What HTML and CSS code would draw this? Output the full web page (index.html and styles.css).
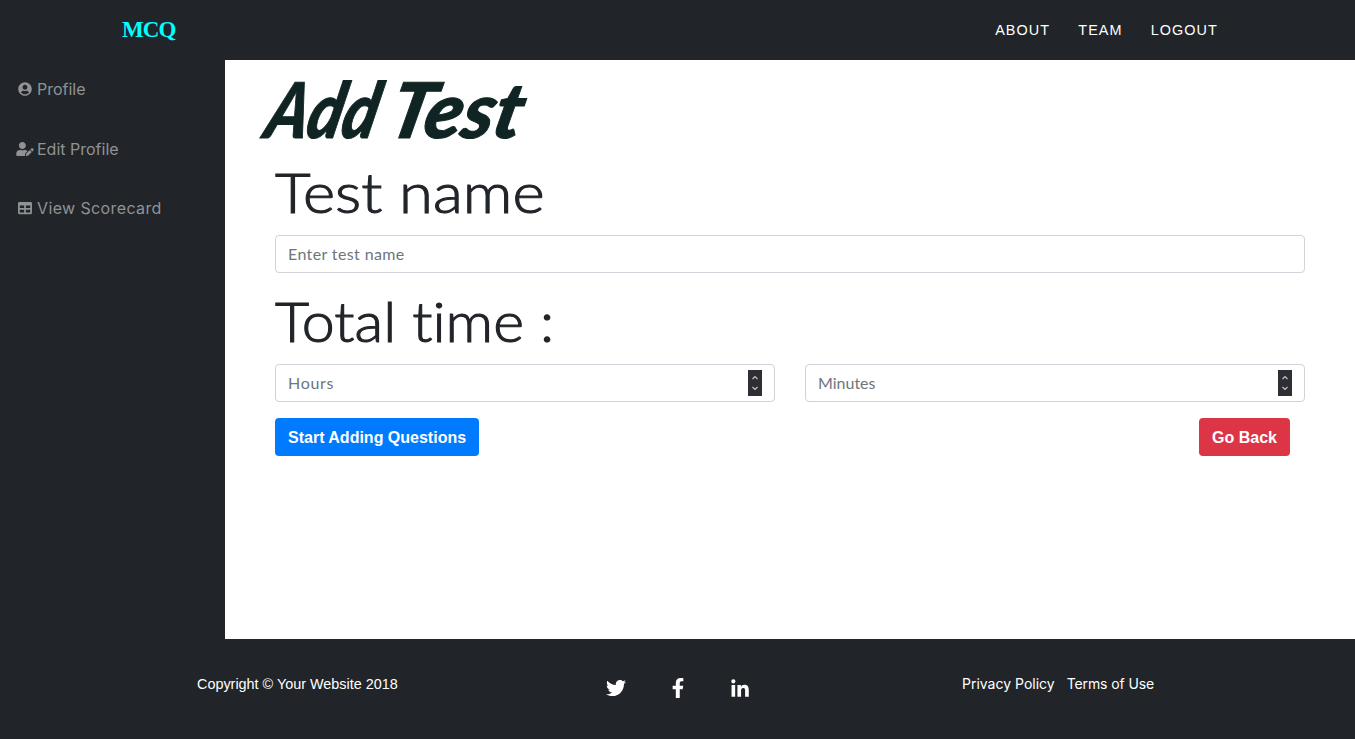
FILE: index.html
```html
<!DOCTYPE html>
<html lang="en">
<head>
<meta charset="utf-8">
<title>Add Test</title>
<link rel="stylesheet" href="styles.css">
</head>
<body>
<header class="navbar">
  <a class="brand">MCQ</a>
  <nav class="nav-links"><a>ABOUT</a><a>TEAM</a><a>LOGOUT</a></nav>
</header>
<div class="wrapper">
  <aside class="sidebar">
    <a class="side-link"><svg class="side-icon" viewBox="0 0 496 512"><path d="M248 8C111 8 0 119 0 256s111 248 248 248 248-111 248-248S385 8 248 8zm0 96c48.600 0 88 39.400 88 88s-39.400 88-88 88-88-39.400-88-88 39.400-88 88-88zm0 344c-58.700 0-111.300-26.600-146.500-68.200 18.800-35.400 55.600-59.800 98.500-59.800 2.400 0 4.800.4 7.100 1.100 13 4.200 26.600 6.900 40.900 6.900 14.300 0 28-2.700 40.900-6.900 2.300-.7 4.700-1.100 7.100-1.100 42.900 0 79.700 24.400 98.500 59.800C359.300 421.400 306.700 448 248 448z"/></svg><span class="t-profile">Profile</span></a>
    <a class="side-link"><svg class="side-icon" viewBox="0 0 640 512"><path d="M224 256c70.700 0 128-57.300 128-128S294.700 0 224 0 96 57.300 96 128s57.300 128 128 128zm89.600 32h-16.700c-22.200 10.200-46.900 16-72.900 16s-50.600-5.800-72.900-16h-16.700C60.200 288 0 348.200 0 422.400V464c0 26.500 21.500 48 48 48h274.900c-2.400-6.800-3.400-14-2.600-21.300l6.800-60.900 1.200-11.100 7.900-7.900 77.300-77.300c-24.500-27.700-60-45.500-99.900-45.500zm45.300 145.300l-6.800 61c-1.100 10.200 7.500 18.800 17.600 17.600l60.900-6.800 137.900-137.900-71.700-71.700-137.900 137.800zM633 268.900L595.100 231c-9.300-9.300-24.500-9.300-33.800 0l-37.800 37.800-4.100 4.100 71.800 71.700 41.800-41.800c9.300-9.400 9.300-24.500 0-33.900z"/></svg><span class="t-edit">Edit Profile</span></a>
    <a class="side-link"><svg class="side-icon" viewBox="0 0 512 512"><path d="M464 32H48C21.490 32 0 53.490 0 80v352c0 26.510 21.490 48 48 48h416c26.510 0 48-21.490 48-48V80c0-26.510-21.490-48-48-48zM224 416H64v-96h160v96zm0-160H64v-96h160v96zm224 160H288v-96h160v96zm0-160H288v-96h160v96z"/></svg><span class="t-score">View Scorecard</span></a>
  </aside>
  <main class="content">
    <h1 class="title"><span class="word-add">Add</span> <span class="word-test">Test</span></h1>
    <form class="form">
      <label class="label label-name">Test name</label>
      <div class="field"><span class="ph ph-name">Enter test name</span></div>
      <label class="label label-time">Total time :</label>
      <div class="row">
        <div class="field"><span class="ph ph-hours">Hours</span><span class="spinner"><svg viewBox="0 0 14 26"><path d="M4.500 9l2.500-2.500L9.500 9M4.500 17l2.500 2.500L9.500 17"/></svg></span></div>
        <div class="field"><span class="ph ph-min">Minutes</span><span class="spinner"><svg viewBox="0 0 14 26"><path d="M4.500 9l2.500-2.500L9.500 9M4.500 17l2.500 2.500L9.500 17"/></svg></span></div>
      </div>
      <div class="actions">
        <button type="button" class="btn primary">Start Adding Questions</button>
        <button type="button" class="btn danger">Go Back</button>
      </div>
    </form>
  </main>
</div>
<footer class="footer">
  <div class="copyright">Copyright © Your Website 2018</div>
  <div class="social">
    <svg class="social-icon" viewBox="0 0 512 512"><path d="M459.370 151.716c.325 4.548.325 9.097.325 13.645 0 138.720-105.583 298.558-298.558 298.558-59.452 0-114.680-17.219-161.137-47.106 8.447.974 16.568 1.299 25.340 1.299 49.055 0 94.213-16.568 130.274-44.832-46.132-.975-84.792-31.188-98.112-72.772 6.498.974 12.995 1.624 19.818 1.624 9.421 0 18.843-1.300 27.614-3.573-48.081-9.747-84.143-51.980-84.143-102.985v-1.299c13.969 7.797 30.214 12.670 47.431 13.319-28.264-18.843-46.781-51.005-46.781-87.391 0-19.492 5.197-37.360 14.294-52.954 51.655 63.675 129.300 105.258 216.365 109.807-1.624-7.797-2.599-15.918-2.599-24.040 0-57.828 46.782-104.934 104.934-104.934 30.213 0 57.502 12.670 76.670 33.137 23.715-4.548 46.456-13.320 66.599-25.340-7.798 24.366-24.366 44.833-46.132 57.827 21.117-2.273 41.584-8.122 60.426-16.243-14.292 20.791-32.161 39.308-52.628 54.253z"/></svg>
    <svg class="social-icon" viewBox="0 0 320 512"><path d="M279.140 288l14.220-92.660h-88.910v-60.130c0-25.350 12.420-50.060 52.240-50.060h40.420V6.260S260.430 0 225.360 0c-73.220 0-121.080 44.380-121.080 124.720v70.620H22.890V288h81.390v224h100.170V288z"/></svg>
    <svg class="social-icon" viewBox="0 -32 448 512"><path d="M100.280 448H7.400V148.900h92.880zM53.790 108.100C24.090 108.100 0 83.500 0 53.800a53.790 53.790 0 0 1 107.580 0c0 29.700-24.100 54.300-53.790 54.300zM447.900 448h-92.680V302.400c0-34.700-.7-79.200-48.290-79.200-48.290 0-55.690 37.700-55.690 76.700V448h-92.780V148.900h89.080v40.800h1.300c12.400-23.500 42.690-48.300 88.280-48.300 94.400 0 111.280 62.200 111.280 142.300V448z"/></svg>
  </div>
  <div class="legal"><a class="t-privacy">Privacy Policy</a><a class="t-terms">Terms of Use</a></div>
</footer>
</body>
</html>
```
FILE: styles.css
```css
* { box-sizing: border-box; }
body {
  margin: 0;
  height: 739px;
  display: flex;
  flex-direction: column;
  background: #212529;
  color: #212529;
  font-family: Lato, sans-serif;
  overflow: hidden;
}
svg { display: block; fill: currentColor; }
.navbar {
  height: 60px;
  display: flex;
  justify-content: space-between;
  align-items: center;
  padding: 0 136px 0 122px;
}
.brand {
  font: bold 23px "Liberation Serif", serif;
  letter-spacing: -0.9px;
  color: #0ff;
}
.nav-links {
  display: flex;
  gap: 28px;
  font: 14.4px "Liberation Sans", sans-serif;
  letter-spacing: 1.1px;
  color: #fff;
  margin-right: 1px;
}
.wrapper { display: flex; height: 579px; }
.sidebar { width: 225px; color: #909294; font: 16px Inter, sans-serif; }
.side-link {
  display: flex;
  align-items: center;
  gap: 3px;
  height: 59.5px;
  padding: 0 0 1px 16px;
}
.side-icon { width: 18px; height: 14px; }
.t-score { letter-spacing: 0.38px; }
.content { flex: 1; background: #fff; padding: 6px 50px 0; }
.title {
  display: flex;
  margin: 0 0 0 -6px;
  height: 88px;
  width: max-content;
  font: italic 900 77px/84px Lato, sans-serif;
  color: #102523;
  -webkit-text-stroke: 1px #102523;
  transform: skewX(-13deg);
}
.word-add { width: 123px; transform: scaleX(0.83); transform-origin: left; }
.word-test { transform: scaleX(1); transform-origin: left; }
.form { display: flex; flex-direction: column; }
.label {
  width: max-content;
  font-size: 56px;
  font-weight: 300;
  line-height: 64px;
  height: 75px;
  white-space: nowrap;
  font-variant-ligatures: none;
  transform-origin: left;
  -webkit-text-stroke: 1.1px #212529;
}
.label-name { margin-top: 6px; transform: scaleX(1.1); }
.label-time { margin-top: 16px; transform: scaleX(1.055); }
.field {
  flex: 1 0 38px;
  height: 38px;
  display: flex;
  align-items: center;
  justify-content: space-between;
  padding: 0 12px;
  border: 1px solid #ced4da;
  border-radius: 4px;
  color: #6c757d;
  font-size: 16px;
}
.ph { padding-bottom: 2px; }
.ph-name { letter-spacing: 0.38px; }
.ph-hours { letter-spacing: 0.7px; }
.spinner { width: 14px; height: 26px; background: #2e2f34; }
.spinner path { fill: none; stroke: #c5c5c8; stroke-width: 1.2; }
.row { display: flex; gap: 30px; }
.actions { display: flex; justify-content: space-between; padding-right: 15px; margin-top: 16px; }
.btn {
  height: 38px;
  padding: 2px 13px 0;
  border: 0;
  border-radius: 4px;
  color: #fff;
  font: bold 16px "Liberation Sans", sans-serif;
}
.primary { background: #007bff; }
.danger { background: #dc3545; }
.footer { display: flex; height: 100px; color: #fff; font-size: 14px; }
.copyright { width: 606px; padding: 37px 0 0 197px; font: 14.4px "Liberation Sans", sans-serif; }
.social { display: flex; width: 356px; gap: 42px; padding-top: 39px; }
.social-icon { width: 20px; height: 20px; }
.legal { display: flex; gap: 12px; padding-top: 36px; font-family: Inter, sans-serif; }
.t-terms { letter-spacing: -0.1px; }
```
